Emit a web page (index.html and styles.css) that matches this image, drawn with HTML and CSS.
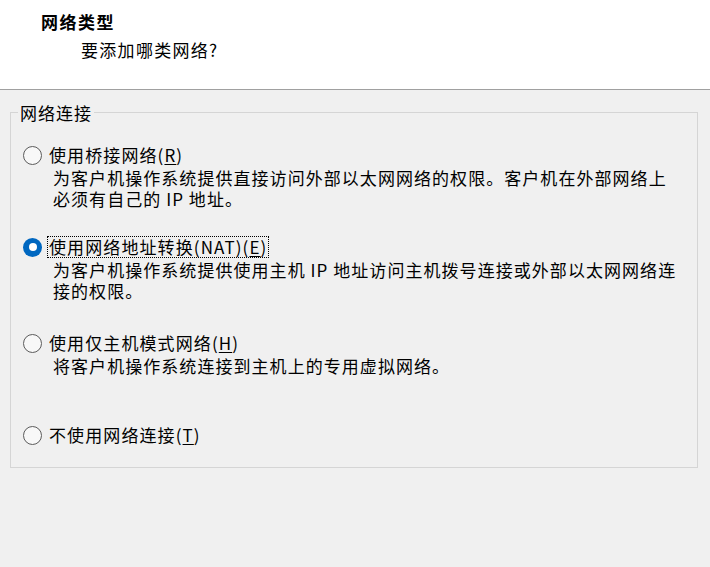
FILE: index.html
```html
<!DOCTYPE html>
<html lang="zh-CN">
<head>
<meta charset="utf-8">
<title>网络类型</title>
<link rel="stylesheet" href="styles.css">
</head>
<body>
<div class="header">
  <div class="title">网络类型</div>
  <div class="subtitle">要添加哪类网络?</div>
</div>
<div class="content">
  <fieldset class="group">
    <legend class="legend">网络连接</legend>
    <div class="option first">
      <div class="row"><span class="radio"></span><span class="label">使用桥接网络(<u>R</u>)</span></div>
      <div class="desc">为客户机操作系统提供直接访问外部以太网网络的权限。客户机在外部网络上<br>必须有自己的 IP 地址。</div>
    </div>
    <div class="option second">
      <div class="row"><span class="radio checked"></span><span class="label focus">使用网络地址转换(NAT)(<u>E</u>)</span></div>
      <div class="desc">为客户机操作系统提供使用主机 IP 地址访问主机拨号连接或外部以太网网络连<br>接的权限。</div>
    </div>
    <div class="option">
      <div class="row"><span class="radio"></span><span class="label">使用仅主机模式网络(<u>H</u>)</span></div>
      <div class="desc">将客户机操作系统连接到主机上的专用虚拟网络。</div>
    </div>
    <div class="option last">
      <div class="row"><span class="radio"></span><span class="label">不使用网络连接(<u>T</u>)</span></div>
    </div>
  </fieldset>
</div>
</body>
</html>
```
FILE: styles.css
```css
html, body {
  margin: 0;
  padding: 0;
}
body {
  width: 710px;
  height: 567px;
  background: #f0f0f0;
  font-family: "Noto Sans CJK SC", "Noto Sans", sans-serif;
  font-size: 17px;
  color: #000;
  overflow: hidden;
}
.header {
  background: #fff;
  height: 79px;
  padding: 10px 0 0 41px;
  border-bottom: 1px solid #a0a0a0;
}
.title {
  font-weight: bold;
  line-height: 23px;
  letter-spacing: 1.5px;
}
.subtitle {
  margin: 5px 0 0 40px;
  line-height: 23px;
  letter-spacing: 1.3px;
}
.content {
  padding: 12px 12px 0 10px;
}
.group {
  margin: 0;
  width: 688px;
  height: 366px;
  box-sizing: border-box;
  border: 1px solid #d5d5d5;
  padding: 20px 0 0 12px;
}
.legend {
  margin-left: -5px;
  padding: 0 2px;
  line-height: 21px;
  letter-spacing: 1px;
}
.option {
  margin-bottom: 25px;
}
.option.first {
  margin-bottom: 26px;
}
.option.second {
  margin-bottom: 30px;
}
.option.last {
  margin-top: 47px;
}
.row {
  display: flex;
  align-items: center;
  height: 24px;
}
.radio {
  width: 19px;
  height: 19px;
  box-sizing: border-box;
  border: 1.3px solid #5c5c5c;
  border-radius: 50%;
  background: #f8f8f8;
  flex: none;
}
.radio.checked {
  border: none;
  background: #0067c0;
  position: relative;
}
.radio.checked::after {
  content: "";
  position: absolute;
  left: 5.5px;
  top: 5.5px;
  width: 8px;
  height: 8px;
  border-radius: 50%;
  background: #fff;
}
.label {
  margin-left: 5px;
  padding: 0 1px;
  line-height: 20px;
  border: 1px dotted transparent;
  letter-spacing: 1.1px;
  white-space: nowrap;
}
.label u {
  text-underline-offset: 2px;
}
.label.focus {
  border-color: #000;
}
.desc {
  margin: 0 0 0 30px;
  line-height: 21px;
  letter-spacing: 1.05px;
  white-space: nowrap;
}
```
